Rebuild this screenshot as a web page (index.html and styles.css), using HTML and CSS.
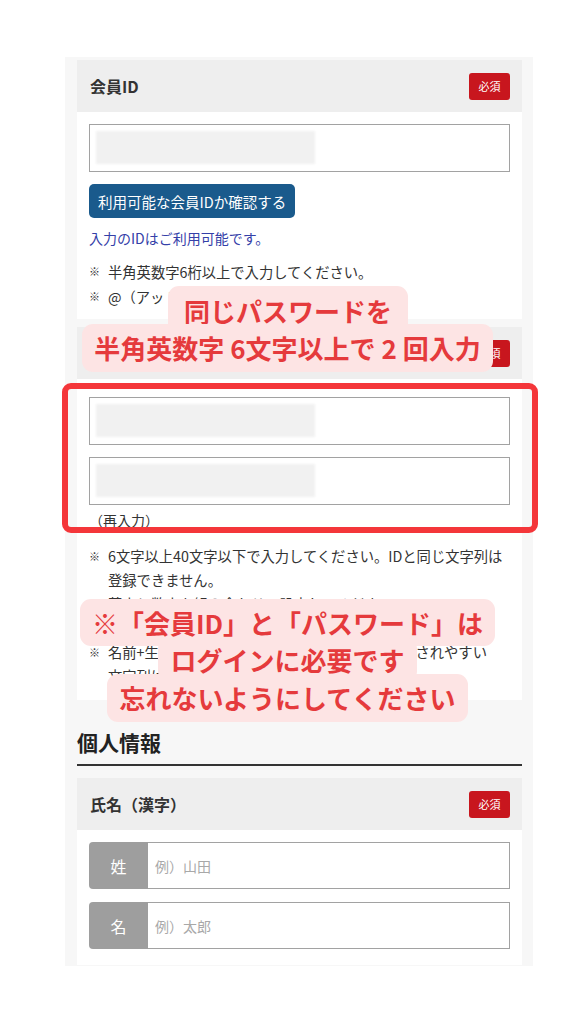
FILE: index.html
```html
<!DOCTYPE html>
<html lang="ja">
<head>
    <meta charset="UTF-8">
    <meta name="viewport" content="width=device-width, initial-scale=1.0">
    <title>会員登録</title>
    <link rel="stylesheet" href="styles.css">
</head>
<body>
    <div class="page">
        <section class="field">
            <div class="field-head">
                <h3>会員ID</h3>
                <span class="req">必須</span>
            </div>
            <div class="field-body">
                <div class="text-box"><span class="masked"></span></div>
                <button class="check-btn">利用可能な会員IDか確認する</button>
                <p class="ok-msg">入力のIDはご利用可能です。</p>
                <ul class="notes">
                    <li>半角英数字6桁以上で入力してください。</li>
                    <li>@（アットマーク）も使用できます。</li>
                </ul>
            </div>
        </section>

        <section class="field field-pw">
            <div class="field-head">
                <h3>パスワード</h3>
                <span class="req">必須</span>
            </div>
            <div class="field-body">
                <div class="text-box"><span class="masked"></span></div>
                <div class="text-box second"><span class="masked"></span></div>
                <p class="retype">（再入力）</p>
                <ul class="notes notes-pw">
                    <li>6文字以上40文字以下で入力してください。IDと同じ文字列は<br>登録できません。<br>英字と数字を組み合わせて設定してください。<br>記号も使用できます。</li>
                    <li>名前+生年月日や電話番号など、第三者から推測されやすい<br>文字列は避けてください。</li>
                </ul>
            </div>
        </section>

        <h2 class="sec-title">個人情報</h2>

        <section class="field field-name">
            <div class="field-head">
                <h3>氏名（漢字）</h3>
                <span class="req">必須</span>
            </div>
            <div class="field-body">
                <div class="name-row">
                    <span class="name-label">姓</span>
                    <input class="name-input" type="text" placeholder="例）山田">
                </div>
                <div class="name-row">
                    <span class="name-label">名</span>
                    <input class="name-input" type="text" placeholder="例）太郎">
                </div>
            </div>
        </section>

        <!-- annotations laid over the form -->
        <div class="mark-box"></div>
        <div class="bubble b1">同じパスワードを</div>
        <div class="bubble b2">半角英数字 6文字以上で 2 回入力</div>
        <div class="bubble b3">※「会員ID」と「パスワード」は</div>
        <div class="bubble b4">ログインに必要です</div>
        <div class="bubble b5">忘れないようにしてください</div>
    </div>
</body>
</html>
```

FILE: styles.css
```css
* {
    box-sizing: border-box;
}
body {
    margin: 0;
    background: #fff;
    color: #333;
    font-family: "Noto Sans CJK JP", "Noto Sans", sans-serif;
}
.page {
    position: relative;
    width: 468px;
    margin: 57px 0 0 65px;
    padding: 3px 11px 1px 12px;
    background: #f7f7f7;
}
.field {
    background: #fff;
}
.field-pw {
    margin-top: 8px;
}
.field-head {
    height: 52px;
    display: flex;
    align-items: center;
    justify-content: space-between;
    padding: 0 12px 0 13px;
    background: #eeeeee;
}
.field-head h3 {
    margin: 0;
    font-size: 16px;
    font-weight: 700;
    color: #333;
}
.req {
    width: 41px;
    height: 27px;
    display: flex;
    align-items: center;
    justify-content: center;
    background: #c8161e;
    color: #fff;
    font-size: 11px;
    border-radius: 3px;
}
.field-body {
    padding: 12px 12px 10px;
}
.field-pw .field-body {
    padding: 18px 12px 12px;
}
.field-name .field-body {
    padding: 12px 12px 16px;
}
.text-box {
    height: 48px;
    border: 1px solid #a2a2a2;
    padding: 6px;
    background: #fff;
}
.text-box.second {
    margin-top: 12px;
}
.masked {
    display: block;
    width: 219px;
    height: 33px;
    background: #f1f1f1;
    filter: blur(1px);
}
.check-btn {
    display: block;
    margin-top: 12px;
    height: 34px;
    padding: 0 9px;
    border: none;
    border-radius: 5px;
    background: #1a5a8c;
    color: #fff;
    font-family: inherit;
    font-size: 14.5px;
}
.ok-msg {
    margin: 10px 0 0;
    line-height: 20px;
    font-size: 14px;
    color: #3440a8;
}
.notes {
    list-style: none;
    margin: 11px 0 0;
    padding: 0;
    font-size: 14.3px;
    line-height: 25px;
}
.notes li {
    position: relative;
    padding-left: 19px;
}
.notes li::before {
    content: "※";
    position: absolute;
    left: 0;
    top: 0;
    font-size: 11px;
    color: #333;
}
.retype {
    margin: 5px 0 0;
    line-height: 20px;
    font-size: 14px;
}
.notes-pw {
    margin-top: 14px;
    line-height: 24px;
}
.sec-title {
    margin: 27px 0 12px;
    padding-bottom: 7px;
    border-bottom: 2px solid #333;
    font-size: 21px;
    line-height: 30px;
    font-weight: 700;
    color: #222;
}
.name-row {
    display: flex;
    height: 47px;
}
.name-row + .name-row {
    margin-top: 13px;
}
.name-label {
    width: 59px;
    display: flex;
    align-items: center;
    justify-content: center;
    background: #9e9e9e;
    color: #fff;
    font-size: 16px;
    border-radius: 4px 0 0 4px;
}
.name-input {
    flex: 1;
    min-width: 0;
    border: 1px solid #a2a2a2;
    border-left: none;
    padding: 0 7px;
    font-family: inherit;
    font-size: 14px;
    color: #333;
    outline: none;
}
.name-input::placeholder {
    color: #a8a8a8;
}

/* annotations */
.mark-box {
    position: absolute;
    left: -3px;
    top: 326px;
    width: 476px;
    height: 150px;
    border: 6px solid #f4363a;
    border-radius: 9px;
}
.bubble {
    position: absolute;
    text-align: center;
    background: #fde4e4;
    color: #e53a3c;
    font-size: 26px;
    font-weight: 700;
    border-radius: 11px;
    white-space: nowrap;
}
.b1 {
    left: 103px;
    top: 229px;
    width: 240px;
    height: 50px;
    line-height: 50px;
}
.b2 {
    left: 17px;
    top: 267px;
    width: 411px;
    height: 48px;
    line-height: 48px;
}
.b3 {
    left: 15px;
    top: 542px;
    width: 415px;
    height: 47px;
    line-height: 47px;
}
.b4 {
    left: 93px;
    top: 581px;
    width: 259px;
    height: 44px;
    line-height: 44px;
}
.b5 {
    left: 42px;
    top: 617px;
    width: 361px;
    height: 48px;
    line-height: 48px;
}
```
